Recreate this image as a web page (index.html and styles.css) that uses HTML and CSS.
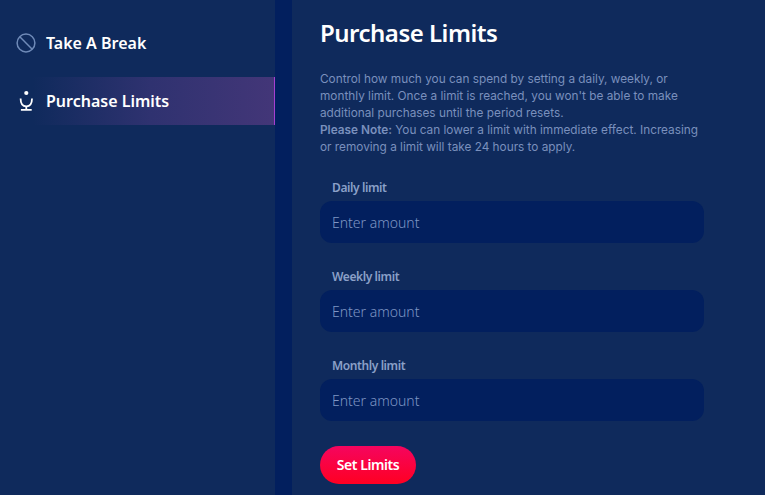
FILE: index.html
```html
<!DOCTYPE html>
<html lang="en">
<head>
  <meta charset="UTF-8" />
  <meta name="viewport" content="width=device-width, initial-scale=1.0"/>
  <title>Purchase Limits</title>
  <link rel="stylesheet" href="styles.css">
</head>
<body>

  <div class="page">

    <!-- SIDEBAR -->
    <div class="sidebar">
      <div class="side-item">
        <svg class="side-icon" width="20" height="20" viewBox="0 0 20 20" fill="none" stroke="#6f8ab8" stroke-width="1.5">
          <circle cx="10" cy="10" r="8.9"/>
          <path d="M3.8 3.8L16.2 16.2"/>
        </svg>
        <span>Take A Break</span>
      </div>
      <div class="side-item active">
        <svg class="side-icon" width="20" height="22" viewBox="0 0 20 22" fill="none" stroke="#fff" stroke-width="1.8">
          <circle cx="10.3" cy="3" r="2.1" fill="#fff" stroke="none"/>
          <path d="M4.6 8.5C4.6 13.6 7 16.3 10.3 16.3C13.6 16.3 16 13.6 16 8.5"/>
          <path d="M10.3 16.3V19.6M4.9 19.8H15.7"/>
        </svg>
        <span>Purchase Limits</span>
      </div>
    </div>

    <div class="gutter"></div>

    <!-- MAIN -->
    <div class="main">
      <h1>Purchase Limits</h1>
      <p class="intro">
        Control how much you can spend by setting a daily, weekly, or<br>
        monthly limit. Once a limit is reached, you won't be able to make<br>
        additional purchases until the period resets.<br>
        <strong>Please Note:</strong> You can lower a limit with immediate effect. Increasing<br>
        or removing a limit will take 24 hours to apply.
      </p>

      <div class="field">
        <label for="daily">Daily limit</label>
        <input type="text" id="daily" placeholder="Enter amount" />
      </div>
      <div class="field">
        <label for="weekly">Weekly limit</label>
        <input type="text" id="weekly" placeholder="Enter amount" />
      </div>
      <div class="field">
        <label for="monthly">Monthly limit</label>
        <input type="text" id="monthly" placeholder="Enter amount" />
      </div>

      <button class="set-btn">Set Limits</button>
    </div>

  </div>

</body>
</html>
```

FILE: styles.css
```css
* {
  box-sizing: border-box;
}

body {
  margin: 0;
  height: 495px;
  overflow: hidden;
  font-family: 'Noto Sans', sans-serif;
  background: #0f2a5c;
}

.page {
  display: flex;
  height: 495px;
}

.sidebar {
  width: 275px;
  padding-top: 19px;
  display: flex;
  flex-direction: column;
  gap: 10px;
}

.side-item {
  height: 48px;
  padding-left: 16px;
  display: flex;
  align-items: center;
  gap: 10px;
  color: #fff;
  font-size: 16px;
  font-weight: 600;
}

.side-item.active {
  background: linear-gradient(90deg, #0f2a5c 12%, #2f3270 55%, #433678 100%);
  border-right: 1px solid #a53fd0;
}

.gutter {
  width: 17px;
  background: #021f5e;
}

.main {
  flex: 1;
  padding: 17px 0 0 28px;
}

h1 {
  margin: 0;
  color: #fff;
  font-size: 24px;
  line-height: 32px;
  font-weight: 600;
  letter-spacing: -0.5px;
}

.intro {
  margin: 22px 0 21px;
  color: #7a90bd;
  font-family: Inter, sans-serif;
  font-size: 11.8px;
  line-height: 17px;
}

.intro strong {
  font-weight: 600;
}

.field {
  width: 384px;
  margin-bottom: 23px;
}

.field label {
  display: block;
  height: 21px;
  margin-bottom: 3px;
  padding: 1px 0 0 12px;
  color: #8ba0c8;
  font-size: 12px;
  font-weight: 600;
  line-height: 20px;
  letter-spacing: -0.4px;
}

.field input {
  display: block;
  width: 100%;
  height: 42px;
  padding: 0 12px;
  border: none;
  border-radius: 12px;
  background: #021f5e;
  color: #fff;
  font-family: 'Noto Sans', sans-serif;
  font-size: 14px;
  font-weight: 300;
  outline: none;
}

.field input::placeholder {
  color: #7f96c4;
  opacity: 1;
}

.set-btn {
  display: block;
  width: 96px;
  height: 38px;
  margin-top: 25px;
  padding: 0 0 2px;
  border: none;
  border-radius: 19px;
  background: linear-gradient(180deg, #f5055f, #ff0022);
  color: #fff;
  font-family: 'Noto Sans', sans-serif;
  font-size: 14px;
  font-weight: 600;
  letter-spacing: -0.45px;
  cursor: pointer;
}
```
